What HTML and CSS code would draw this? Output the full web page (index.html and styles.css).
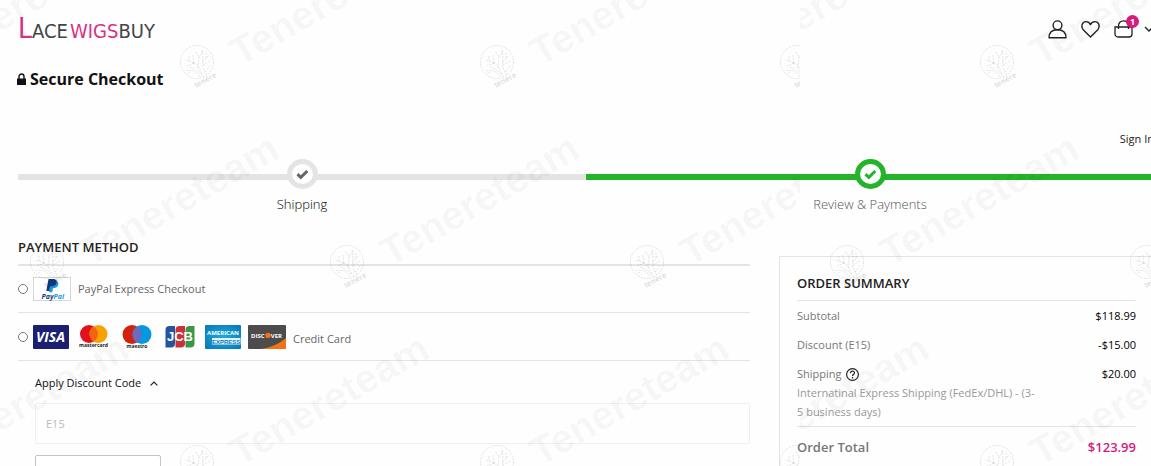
FILE: index.html
```html
<!DOCTYPE html>
<html lang="en">
<head>
    <meta charset="UTF-8">
    <meta name="viewport" content="width=device-width, initial-scale=1.0">
    <title>Secure Checkout</title>
    <link rel="stylesheet" href="styles.css">
</head>
<body>

    <div class="page">
        <header class="header">
            <a href="#" class="logo"><span class="logo-first">L</span>ACE<span class="logo-pink">WIGS</span>BUY</a>
            <nav class="header-links">
                <a href="#" aria-label="My account">
                    <svg width="19" height="19" viewBox="0 0 19 19" fill="none" stroke="#222" stroke-width="1.4">
                        <circle cx="9.5" cy="5.3" r="4.4"/>
                        <path d="M1 17.7c0-4.800 3-8 8.500-8s8.500 3.200 8.500 8z" stroke-linejoin="round"/>
                    </svg>
                </a>
                <a href="#" aria-label="Wishlist">
                    <svg width="19" height="19" viewBox="0 0 19 19" fill="none" stroke="#222" stroke-width="1.4">
                        <path d="M9.500 17L2 9.400C-.3 6.300 1.300 1.600 5 1.600c2.200 0 3.700 1.200 4.500 3 .8-1.800 2.300-3 4.500-3 3.700 0 5.300 4.700 3 7.800z" stroke-linejoin="round"/>
                    </svg>
                </a>
                <a href="#" class="cart" aria-label="Cart">
                    <svg width="19" height="19" viewBox="0 0 19 19" fill="none" stroke="#222" stroke-width="1.3">
                        <path d="M1 7h17v7a3 3 0 0 1-3 3H4a3 3 0 0 1-3-3zM4.500 9V6C4.500 2.800 6.500.8 9.500.8s5 2 5 5.200v3"/>
                    </svg>
                    <span class="cart-count">1</span>
                </a>
                <svg class="cart-arrow" width="10" height="6" viewBox="0 0 10 6" fill="none" stroke="#222" stroke-width="1.3"><path d="M1 1l4 4 4-4"/></svg>
            </nav>
        </header>

        <h1 class="title">
            <svg width="9" height="12" viewBox="0 0 9 12"><path d="M0 5.500h9V12H0z" fill="#111"/><path d="M2 6V3.500a2.500 2.500 0 0 1 5 0V6" fill="none" stroke="#111" stroke-width="1.400"/></svg>
            Secure Checkout
        </h1>

        <div class="sign-in"><a href="#">Sign In</a></div>

        <ol class="steps">
            <li class="step">
                <span class="step-mark">
                    <svg width="13" height="11" viewBox="0 0 13 11" fill="none" stroke="currentColor" stroke-width="3"><path d="M1.500 5.200l3.300 3.200L11.300 2"/></svg>
                </span>
                <span class="step-label">Shipping</span>
            </li>
            <li class="step active">
                <span class="step-mark">
                    <svg width="13" height="11" viewBox="0 0 13 11" fill="none" stroke="currentColor" stroke-width="3"><path d="M1.500 5.200l3.300 3.200L11.300 2"/></svg>
                </span>
                <span class="step-label">Review &amp; Payments</span>
            </li>
        </ol>

        <main class="columns">
            <form class="payment">
                <h2>Payment Method</h2>

                <div class="method">
                    <input type="radio" name="method" id="paypal">
                    <label for="paypal">
                        <!-- PayPal -->
                        <svg class="card" width="38" height="24" viewBox="0 0 38 24">
                            <rect x=".5" y=".5" width="37" height="23" fill="#fff" stroke="#d5d5d5"/>
                            <path d="M17.500 4H22c3 0 4 2 3 4.500-.8 2-2.500 2.700-5 2.700l-.8 4H16z" fill="#179bd7"/>
                            <path d="M15.500 2H20c3 0 4.300 1.600 3.500 4.200-.7 2.200-2.500 3.100-5 3.100h-1.300l-.9 4.700h-3z" fill="#123984"/>
                            <text x="8.500" y="21.500" class="paypal-text"><tspan fill="#123984">Pay</tspan><tspan fill="#179bd7">Pal</tspan></text>
                        </svg>
                        <span class="method-name">PayPal Express Checkout</span>
                    </label>
                </div>

                <div class="method method-cards">
                    <input type="radio" name="method" id="credit">
                    <label for="credit">
                        <!-- Visa -->
                        <svg class="card" width="38" height="24" viewBox="0 0 38 24">
                            <rect width="36" height="24" rx="1" fill="#1a1f71"/>
                            <text x="3" y="17" class="visa-text">VISA</text>
                        </svg>
                        <!-- Mastercard -->
                        <svg class="card" width="38" height="24" viewBox="0 0 38 24">
                            <circle cx="13" cy="9" r="9" fill="#e2111c"/>
                            <circle cx="22.500" cy="9" r="9" fill="#f8a000"/>
                            <path d="M17.750 1.400a9 9 0 0 1 0 15.200 9 9 0 0 1 0-15.200z" fill="#f36410"/>
                            <text x="17.500" y="22" class="card-text">mastercard</text>
                        </svg>
                        <!-- Maestro -->
                        <svg class="card" width="38" height="24" viewBox="0 0 38 24">
                            <circle cx="13" cy="9.500" r="9.500" fill="#d3200f"/>
                            <circle cx="23" cy="9.500" r="9.500" fill="#0299e0"/>
                            <path d="M18 1.400a9.500 9.500 0 0 1 0 16.200 9.500 9.500 0 0 1 0-16.200z" fill="#6c6bbd"/>
                            <text x="18" y="23" class="card-text">maestro</text>
                        </svg>
                        <!-- JCB -->
                        <svg class="card" width="38" height="24" viewBox="0 0 38 24">
                            <path d="M7.500 1H13v17.500a4 4 0 0 1-4 4H3.500V5a4 4 0 0 1 4-4z" fill="#2254a0"/>
                            <path d="M17.500 1H23v17.500a4 4 0 0 1-4 4h-5.500V5a4 4 0 0 1 4-4z" fill="#cc3138"/>
                            <path d="M27.500 1h5v17.500a4 4 0 0 1-4 4h-5V5a4 4 0 0 1 4-4z" fill="#3c9648"/>
                            <text x="18" y="16" class="jcb-text">JCB</text>
                        </svg>
                        <!-- American Express -->
                        <svg class="card" width="38" height="24" viewBox="0 0 38 24">
                            <defs>
                                <radialGradient id="amex" cx=".5" cy=".5" r=".7">
                                    <stop offset="0" stop-color="#1badd8"/>
                                    <stop offset="1" stop-color="#0777b8"/>
                                </radialGradient>
                            </defs>
                            <rect width="36" height="24" rx="1" fill="url(#amex)"/>
                            <text x="18" y="10" class="amex-text">AMERICAN</text>
                            <rect x="7" y="13" width="28.500" height="6.500" fill="#e6f5fb"/>
                            <text x="21.200" y="18.500" class="express-text">EXPRESS</text>
                        </svg>
                        <!-- Discover -->
                        <svg class="card" width="38" height="24" viewBox="0 0 38 24">
                            <rect width="38" height="24" rx="1" fill="#4c4c4d"/>
                            <path d="M38 13v10a1 1 0 0 1-1 1H13c10-1.500 19-5.500 25-11z" fill="#f47216"/>
                            <text x="3" y="12.800" class="discover-text">DISC</text>
                            <circle cx="20" cy="10.400" r="2.700" fill="#f47216"/>
                            <text x="22.800" y="12.800" class="discover-text">VER</text>
                        </svg>
                        <span class="method-name">Credit Card</span>
                    </label>
                </div>

                <div class="discount">
                    <label class="discount-title" for="code">
                        Apply Discount Code
                        <svg width="8" height="5" viewBox="0 0 8 5" fill="none" stroke="#222" stroke-width="1.200"><path d="M.6 4.400L4 1l3.400 3.400"/></svg>
                    </label>
                    <input type="text" id="code" value="E15" disabled>
                    <button type="button" class="discount-btn" aria-label="Cancel coupon"></button>
                </div>
            </form>

            <aside class="summary">
                <h2>Order Summary</h2>
                <table>
                    <tbody>
                        <tr>
                            <th>Subtotal</th>
                            <td>$118.99</td>
                        </tr>
                        <tr>
                            <th>Discount (E15)</th>
                            <td>-$15.00</td>
                        </tr>
                        <tr class="shipping">
                            <th>
                                <span class="shipping-title">Shipping
                                    <svg width="13" height="13" viewBox="0 0 13 13" fill="none" stroke="#222"><circle cx="6.500" cy="6.500" r="5.900" stroke-width="1.200"/><path d="M4.600 5.200c0-2.700 3.900-2.500 3.900-.3 0 1.400-2 1.500-2 3.200M6.500 9v1.400" stroke-width="1.200"/></svg>
                                </span>
                                <span class="shipping-note">Internatinal Express Shipping (FedEx/DHL) - (3-<wbr>5 business days)</span>
                            </th>
                            <td>$20.00</td>
                        </tr>
                    </tbody>
                    <tfoot>
                        <tr>
                            <th>Order Total</th>
                            <td>$123.99</td>
                        </tr>
                    </tfoot>
                </table>
            </aside>
        </main>
    </div>

    <!-- Repeating stamp over the whole page, two sheets side by side -->
    <div class="watermark" aria-hidden="true">
        <svg width="800" height="600">
            <defs>
                <g id="stamp">
                    <g fill="none" stroke="#000" stroke-opacity=".12" stroke-width=".9" stroke-dasharray="2 1">
                        <circle cx="17" cy="17" r="16.500"/>
                        <path d="M24 32C20 27 16 24 10 22M27 30c-4-5-5-10-4-17M20 32c-3-6-8-8-15-6M22 29c-3-6-4-9-8-11M14 18L5 15M14 18l-1-9M14 18l-7 3M18 23l1-11-4-6M19 12l4-6M23 17l6-7M23 20l7-4M25 27l5-6M10 27l-3 2M9 16l0-6M23 13l-1-8M26 13l0-5"/>
                    </g>
                    <text class="stamp-name" transform="translate(16 43) rotate(-28)">tenere</text>
                    <text class="stamp-text" transform="translate(60 22) rotate(-30)">Tenereteam</text>
                </g>
                <g id="sheet">
                    <use href="#stamp" x="-120" y="45"/>
                    <use href="#stamp" x="180" y="45"/>
                    <use href="#stamp" x="480" y="45"/>
                    <use href="#stamp" x="780" y="45"/>
                    <use href="#stamp" x="30" y="245"/>
                    <use href="#stamp" x="330" y="245"/>
                    <use href="#stamp" x="630" y="245"/>
                    <use href="#stamp" x="-120" y="445"/>
                    <use href="#stamp" x="180" y="445"/>
                    <use href="#stamp" x="480" y="445"/>
                    <use href="#stamp" x="780" y="445"/>
                </g>
            </defs>
            <use href="#sheet"/>
        </svg>
        <svg width="800" height="600"><use href="#sheet"/></svg>
    </div>

</body>
</html>
```
FILE: styles.css
```css
* {
    box-sizing: border-box;
}

body {
    margin: 0;
    position: relative;
    overflow: hidden;
    background-color: #fefefe;
    color: #222;
    font-family: "Open Sans", "Noto Sans", sans-serif;
    font-size: 11px;
    line-height: 18px;
}

a {
    color: #222;
    text-decoration: none;
}

svg {
    display: block;
    flex: none;
}

h1, h2, ol {
    margin: 0;
    padding: 0;
}

/* the container is slightly wider than the window */
.page {
    margin-right: -3px;
    padding-left: 18px;
}

/* Header */
.header {
    display: flex;
    justify-content: space-between;
    align-items: center;
    height: 58px;
}

.logo {
    padding-top: 2px;
    color: #444;
    font-family: "DejaVu Sans Condensed", "Open Sans", sans-serif;
    font-size: 20px;
    line-height: 30px;
}

.logo-first {
    font-size: 28px;
}

.logo-first,
.logo-pink {
    color: #d63384;
}

.logo-pink {
    margin-left: 2px;
}

.header-links {
    display: flex;
    align-items: center;
    gap: 14px;
}

.cart {
    position: relative;
}

.cart-count {
    position: absolute;
    top: -5px;
    right: -6px;
    width: 13px;
    height: 13px;
    border-radius: 50%;
    background-color: #d41c7c;
    color: #fff;
    font-size: 9px;
    font-weight: bold;
    line-height: 13px;
    text-align: center;
}

.cart-arrow {
    margin-left: -3px;
}

/* Title */
.title {
    display: flex;
    align-items: center;
    gap: 4px;
    margin-top: 9px;
    margin-left: -1px;
    color: #111;
    font-size: 16px;
    font-weight: bold;
    line-height: 24px;
}

.sign-in {
    margin-top: 39px;
    text-align: right;
}

/* Progress steps */
.steps {
    display: flex;
    margin-top: 11px;
    list-style: none;
}

.step {
    flex: 1;
    display: flex;
    flex-direction: column;
    align-items: center;
    gap: 6px;
    color: #000;
    font-size: 13px;
    font-weight: 300;
    background: linear-gradient(#e4e4e4, #e4e4e4) 0 15px / 100% 6px no-repeat;
}

.step-mark {
    display: flex;
    align-items: center;
    justify-content: center;
    width: 31px;
    height: 30px;
    border: 5px solid #e4e4e4;
    border-radius: 50%;
    background-color: #fff;
    color: #666;
}

.step.active {
    color: #555;
    background-image: linear-gradient(#24b42a, #24b42a);
}

.step.active .step-mark {
    border-color: #24b42a;
    color: #24b42a;
}

/* Two columns */
.columns {
    display: grid;
    grid-template-columns: 1fr 375px;
    gap: 29px;
    margin-top: 25px;
}

h2 {
    font-size: 13px;
    font-weight: 600;
    line-height: 18px;
    text-transform: uppercase;
}

/* Payment */
.payment h2 {
    padding-bottom: 8px;
    border-bottom: 2px solid #e4e4e4;
}

.method {
    display: flex;
    align-items: center;
    height: 47px;
    border-bottom: 1px solid #e4e4e4;
    color: #666;
}

.method input {
    width: 10px;
    height: 10px;
    margin: 0 5px 0 0;
}

.method label {
    display: flex;
    align-items: center;
    gap: 5px;
}

.method-cards {
    height: 48px;
}

.method-name {
    margin-left: 2px;
}

.method-cards .method-name {
    padding-top: 4px;
}

.paypal-text {
    font: italic bold 7px "Open Sans", sans-serif;
}

.visa-text {
    fill: #fff;
    font: italic bold 14px "Open Sans", sans-serif;
}

.card-text {
    fill: #222;
    font: bold 5px "Open Sans", sans-serif;
    text-anchor: middle;
}

.jcb-text {
    fill: #fff;
    font: bold 13px "Liberation Sans", sans-serif;
    text-anchor: middle;
}

.amex-text {
    fill: #fff;
    font: bold 6px "Open Sans", sans-serif;
    text-anchor: middle;
}

.express-text {
    fill: #0a7fbc;
    font: bold 6px "Liberation Sans", sans-serif;
    text-anchor: middle;
}

.discover-text {
    fill: #fff;
    font: bold 6px "Open Sans", sans-serif;
}

/* Discount code */
.discount {
    padding: 13px 0 0 17px;
}

.discount-title {
    display: flex;
    align-items: center;
    gap: 9px;
    color: #111;
}

.discount input {
    display: block;
    width: 100%;
    height: 41px;
    margin-top: 11px;
    padding: 0 10px;
    border: 1px solid #f0f0f0;
    border-radius: 2px;
    background-color: transparent;
    color: #bbb;
    font: inherit;
}

.discount-btn {
    display: block;
    width: 126px;
    height: 36px;
    margin-top: 11px;
    border: 1px solid #c4c4c4;
    border-radius: 2px;
    background-color: #fff;
}

/* Order summary */
.summary {
    margin-top: 18px;
    padding: 17px 17px 20px;
    border: 1px solid #e4e4e4;
}

.summary h2 {
    padding-bottom: 8px;
    border-bottom: 1px solid #e4e4e4;
}

.summary table {
    width: 100%;
    border-collapse: collapse;
}

.summary th,
.summary td {
    padding: 6px 0 5px;
    font-weight: normal;
    text-align: left;
    vertical-align: top;
}

.summary th {
    color: #777;
}

.summary td {
    color: #000;
    text-align: right;
}

.summary .shipping th {
    padding-bottom: 5px;
}

.shipping-title {
    display: flex;
    align-items: center;
    gap: 4px;
}

.shipping-note {
    display: block;
    max-width: 242px;
    color: #999;
    line-height: 19px;
}

.summary tfoot th,
.summary tfoot td {
    padding-top: 11px;
    border-top: 1px solid #e4e4e4;
    font-size: 13px;
    font-weight: 600;
}

.summary tfoot td {
    color: #d41c7c;
}

/* Watermark */
.watermark {
    position: absolute;
    inset: 0;
    display: flex;
    overflow: hidden;
    pointer-events: none;
}

.stamp-text {
    fill: #000;
    fill-opacity: 0.04;
    font: bold 40px "Liberation Sans", sans-serif;
}

.stamp-name {
    fill: #000;
    fill-opacity: 0.15;
    font: bold 8px "Liberation Sans", sans-serif;
}
```
